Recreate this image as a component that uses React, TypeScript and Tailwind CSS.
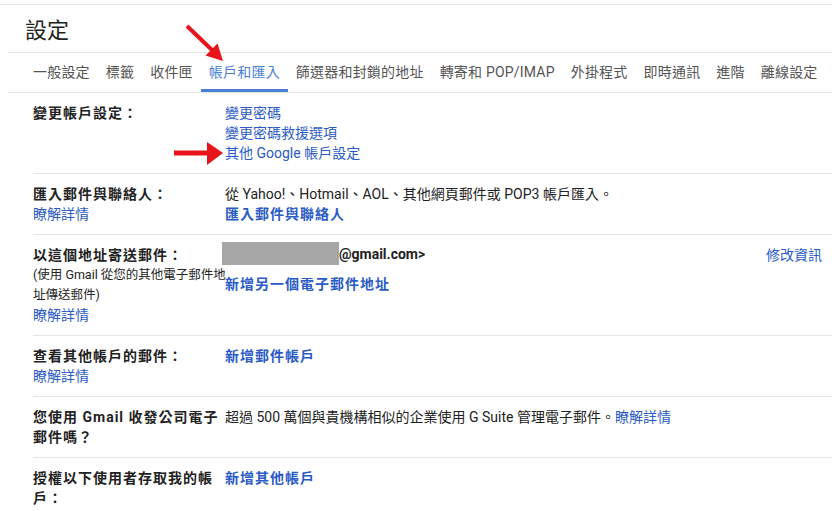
import React from 'react';

const tabs = ['一般設定', '標籤', '收件匣', '帳戶和匯入', '篩選器和封鎖的地址', '轉寄和 POP/IMAP', '外掛程式', '即時通訊', '進階', '離線設定'];
const activeTab = '帳戶和匯入';

const link = 'text-[#2a5bc6]';
const boldLabel = 'font-bold text-[14px] tracking-[1px] text-[#222]';

const Row: React.FC<{ label: React.ReactNode; children: React.ReactNode; aside?: React.ReactNode }> = ({ label, children, aside }) => (
  <div className="flex border-b border-[#e5e5e5] py-[10px] leading-[20px]">
    <div className="w-[192px] shrink-0">{label}</div>
    <div className="flex-1 min-w-0">{children}</div>
    {aside && <div className="pr-[10px]">{aside}</div>}
  </div>
);

const LearnMore = () => <div className={`${link} text-[14px]`}>瞭解詳情</div>;

const Arrows = () => (
  <svg className="absolute left-0 top-0 pointer-events-none" width="832" height="511">
    <line x1="187" y1="26" x2="212" y2="50" stroke="#e8141b" strokeWidth="4" />
    <polygon points="223,61 217.5,43.5 205.5,55.5" fill="#e8141b" />
    <line x1="174" y1="153" x2="209" y2="153" stroke="#e8141b" strokeWidth="5" />
    <polygon points="207,142 223,153 207,165" fill="#e8141b" />
  </svg>
);

export default function App() {
  return (
    <div className="relative w-[832px] h-[511px] overflow-hidden bg-white text-[#222] font-['Roboto','Noto_Sans_CJK_TC',sans-serif]">
      <div className="mt-[4px] border-t border-[#e6e6e6]">
        <div className="h-[47px] pl-[25px] pt-[12px] text-[22px] leading-[28px] text-[#222]">設定</div>
        <div className="ml-[8px] h-[41px] border-t border-b border-[#e6e6e6] flex pl-[17px]">
          {tabs.map(t =>
            t === activeTab ? (
              <div key={t} className="px-[8px] h-full flex items-center pt-[3px] border-b-[3px] border-[#4a7fd4] text-[14px] tracking-[0.2px] text-[#4d7fd8] whitespace-nowrap">
                {t}
              </div>
            ) : (
              <div key={t} className="px-[8px] h-full flex items-center text-[14px] tracking-[0.2px] text-[#555] whitespace-nowrap">
                {t}
              </div>
            )
          )}
        </div>

        <div className="ml-[33px] text-[14px]">
          <Row label={<div className={boldLabel}>變更帳戶設定：</div>}>
            <div className={link}>變更密碼</div>
            <div className={link}>變更密碼救援選項</div>
            <div className={link}>其他 Google 帳戶設定</div>
          </Row>

          <Row label={<><div className={boldLabel}>匯入郵件與聯絡人：</div><LearnMore /></>}>
            <div>從 Yahoo!、Hotmail、AOL、其他網頁郵件或 POP3 帳戶匯入。</div>
            <div className={`${link} font-bold tracking-[1px]`}>匯入郵件與聯絡人</div>
          </Row>

          <Row
            label={
              <>
                <div className={boldLabel}>以這個地址寄送郵件：</div>
                <div className="text-[12.5px] whitespace-nowrap">(使用 Gmail 從您的其他電子郵件地</div>
                <div className="text-[12.5px]">址傳送郵件)</div>
                <LearnMore />
              </>
            }
            aside={<div className={link}>修改資訊</div>}
          >
            <div className="flex items-center -mt-[3px] -ml-[3px] h-[23px]">
              <div className="w-[117px] h-[23px] bg-[#a6a6a6]" />
              <span className="font-bold">@gmail.com&gt;</span>
            </div>
            <div className={`${link} font-bold tracking-[1px] mt-[9px]`}>新增另一個電子郵件地址</div>
          </Row>

          <Row label={<><div className={boldLabel}>查看其他帳戶的郵件：</div><LearnMore /></>}>
            <div className={`${link} font-bold tracking-[1px]`}>新增郵件帳戶</div>
          </Row>

          <Row label={<div className={`${boldLabel} pr-[2px]`}>您使用 Gmail 收發公司電子<br />郵件嗎？</div>}>
            <div>
              超過 500 萬個與貴機構相似的企業使用 G Suite 管理電子郵件。<span className={link}>瞭解詳情</span>
            </div>
          </Row>

          <Row label={<div className={boldLabel}>授權以下使用者存取我的帳<br />戶：</div>}>
            <div className={`${link} font-bold tracking-[1px]`}>新增其他帳戶</div>
          </Row>
        </div>
      </div>
      <Arrows />
    </div>
  );
}
